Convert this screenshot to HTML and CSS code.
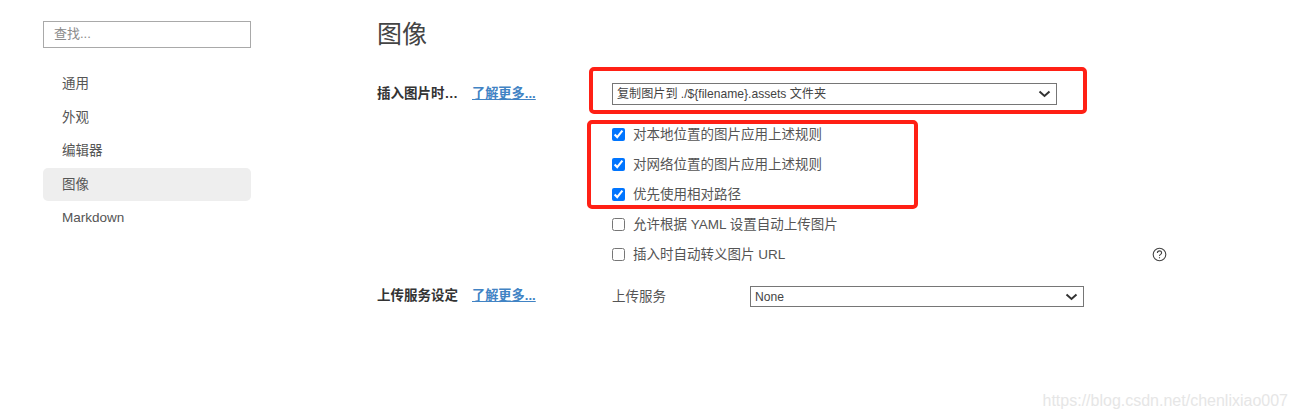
FILE: index.html
```html
<!DOCTYPE html>
<html lang="zh-CN">
<head>
<meta charset="utf-8">
<title>图像</title>
<link rel="stylesheet" href="styles.css">
</head>
<body>
<div class="page">
  <aside class="sidebar">
    <input class="search" type="text" placeholder="查找...">
    <nav class="nav">
      <div class="nav-item">通用</div>
      <div class="nav-item">外观</div>
      <div class="nav-item">编辑器</div>
      <div class="nav-item active">图像</div>
      <div class="nav-item">Markdown</div>
    </nav>
  </aside>
  <main class="main">
    <h1 class="title">图像</h1>
    <section class="group first">
      <div class="label"><span class="label-text">插入图片时…</span><a class="more">了解更多...</a></div>
      <div class="controls">
        <div class="select-wrap wide">
          <select class="select"><option>复制图片到 ./${filename}.assets 文件夹</option></select>
          <svg class="chevron" width="13" height="8" viewBox="0 0 13 8" fill="none" stroke="#333" stroke-width="2"><path d="M1.500 1.500l5 4.500 5-4.500"/></svg>
        </div>
        <label class="check"><input type="checkbox" checked><span>对本地位置的图片应用上述规则</span></label>
        <label class="check"><input type="checkbox" checked><span>对网络位置的图片应用上述规则</span></label>
        <label class="check"><input type="checkbox" checked><span>优先使用相对路径</span></label>
        <label class="check"><input type="checkbox"><span>允许根据 YAML 设置自动上传图片</span></label>
        <div class="check-row">
          <label class="check"><input type="checkbox"><span>插入时自动转义图片 URL</span></label>
          <svg class="help" width="15" height="15" viewBox="0 0 15 15" fill="none" stroke="#444" stroke-width="1.100">
            <circle cx="7.500" cy="7.500" r="6.300"/>
            <path d="M5.400 6c0-1.300 1-2.100 2.100-2.100s2.100.8 2.100 2c0 1.500-2.100 1.500-2.100 3.100"/>
            <path d="M7.500 10.200v1.100"/>
          </svg>
        </div>
      </div>
    </section>
    <section class="group second">
      <div class="label"><span class="label-text">上传服务设定</span><a class="more">了解更多...</a></div>
      <div class="service">
        <span class="service-label">上传服务</span>
        <div class="select-wrap narrow">
          <select class="select"><option>None</option></select>
          <svg class="chevron" width="13" height="8" viewBox="0 0 13 8" fill="none" stroke="#333" stroke-width="2"><path d="M1.500 1.500l5 4.500 5-4.500"/></svg>
        </div>
      </div>
    </section>
  </main>
</div>
<div class="mark mark-one"></div>
<div class="mark mark-two"></div>
<div class="watermark">https://blog.csdn.net/chenlixiao007</div>
</body>
</html>
```
FILE: styles.css
```css
* { box-sizing: border-box; }
html, body { margin: 0; height: 100%; }
body {
  position: relative;
  overflow: hidden;
  background: #fff;
  color: #555;
  font-family: "Liberation Sans", "Noto Sans CJK SC", sans-serif;
  font-size: 13.5px;
}
.page { display: flex; padding-left: 43px; }
.sidebar { width: 208px; padding-top: 21px; flex: none; }
.search {
  display: block;
  width: 208px;
  height: 27px;
  padding: 0 10px 3px;
  border: 1px solid #a9a9a9;
  border-radius: 0;
  outline: 0;
  font: inherit;
  font-size: 13px;
}
.search::placeholder { color: #8a8a8a; }
.nav { margin-top: 19px; }
.nav-item {
  height: 33.500px;
  line-height: 33.500px;
  padding-left: 19px;
  border-radius: 5px;
}
.nav-item.active { background: #eeeeee; }
.main { margin-left: 126px; flex: 1; }
.title {
  margin: 0;
  padding-top: 16px;
  height: 83px;
  font-size: 25px;
  line-height: 36px;
  font-weight: 400;
  color: #444;
}
.group { display: flex; }
.second { margin-top: 16px; }
.label { width: 235px; flex: none; display: flex; height: 22px; line-height: 22px; }
.label-text { width: 95px; flex: none; font-weight: 600; color: #333; white-space: nowrap; }
.more { color: #4183c4; font-size: 13.200px; font-weight: 600; text-decoration: underline; white-space: nowrap; }
.controls { width: 555px; display: flex; flex-direction: column; }
.select-wrap { position: relative; height: 22px; }
.select {
  display: block;
  width: 100%;
  height: 100%;
  padding: 0 20px 0 4px;
  border: 1px solid #767676;
  border-radius: 0;
  appearance: none;
  background-color: #fff;
  color: #444;
  font-family: "Liberation Sans", "Noto Sans CJK SC", sans-serif;
  font-size: 12.100px;
}
.chevron { position: absolute; right: 6px; top: 7px; }
.wide { width: 445px; margin-bottom: 14px; }
.narrow { width: 334px; height: 21px; }
.check { display: flex; align-items: center; height: 30px; }
.check input { width: 13px; height: 13px; margin: 0 8px 0 0; flex: none; }
.check span { padding-bottom: 2px; }
.check-row { display: flex; justify-content: space-between; align-items: center; }
.help { display: block; }
.service { display: flex; align-items: center; }
.service-label { width: 138px; flex: none; padding-bottom: 3px; }
.mark {
  position: absolute;
  border: 4px solid #ff2015;
  border-radius: 5px;
  pointer-events: none;
}
.mark-one { left: 589px; top: 67px; width: 498px; height: 47px; }
.mark-two { left: 587px; top: 120px; width: 331px; height: 89px; }
.watermark {
  position: absolute;
  right: 9px;
  top: 391px;
  color: #e6e6e6;
  font-family: "Liberation Sans", sans-serif;
  font-size: 16px;
  line-height: 20px;
}
```
